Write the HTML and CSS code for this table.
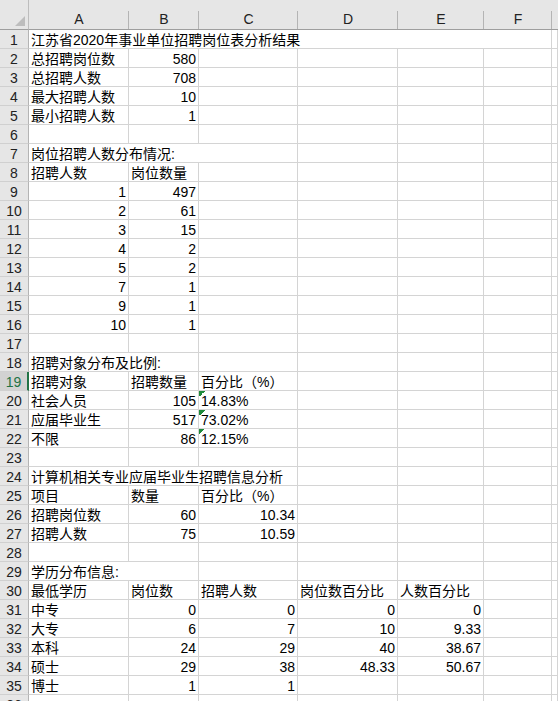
FILE: index.html
```html
<!DOCTYPE html>
<html lang="zh-CN">
<head>
<meta charset="utf-8">
<title>江苏省2020年事业单位招聘岗位表分析结果</title>
<link rel="stylesheet" href="styles.css">
</head>
<body>
<div class="sheet">
  <div class="corner"><svg width="10" height="10" viewBox="0 0 10 10"><polygon points="10,0 10,10 0,10" fill="#bdbdbd"/></svg></div>
  <div class="ch">A</div><div class="ch">B</div><div class="ch">C</div><div class="ch">D</div><div class="ch">E</div><div class="ch">F</div><div class="ch last"></div>

  <div class="n">1</div><div class="c s6">江苏省2020年事业单位招聘岗位表分析结果</div><div class="c"></div>
  <div class="n">2</div><div class="c">总招聘岗位数</div><div class="c r">580</div><div class="c"></div><div class="c"></div><div class="c"></div><div class="c"></div><div class="c"></div>
  <div class="n">3</div><div class="c">总招聘人数</div><div class="c r">708</div><div class="c"></div><div class="c"></div><div class="c"></div><div class="c"></div><div class="c"></div>
  <div class="n">4</div><div class="c">最大招聘人数</div><div class="c r">10</div><div class="c"></div><div class="c"></div><div class="c"></div><div class="c"></div><div class="c"></div>
  <div class="n">5</div><div class="c">最小招聘人数</div><div class="c r">1</div><div class="c"></div><div class="c"></div><div class="c"></div><div class="c"></div><div class="c"></div>
  <div class="n">6</div><div class="c"></div><div class="c"></div><div class="c"></div><div class="c"></div><div class="c"></div><div class="c"></div><div class="c"></div>
  <div class="n">7</div><div class="c s3">岗位招聘人数分布情况:</div><div class="c"></div><div class="c"></div><div class="c"></div><div class="c"></div>
  <div class="n">8</div><div class="c">招聘人数</div><div class="c">岗位数量</div><div class="c"></div><div class="c"></div><div class="c"></div><div class="c"></div><div class="c"></div>
  <div class="n">9</div><div class="c r">1</div><div class="c r">497</div><div class="c"></div><div class="c"></div><div class="c"></div><div class="c"></div><div class="c"></div>
  <div class="n">10</div><div class="c r">2</div><div class="c r">61</div><div class="c"></div><div class="c"></div><div class="c"></div><div class="c"></div><div class="c"></div>
  <div class="n">11</div><div class="c r">3</div><div class="c r">15</div><div class="c"></div><div class="c"></div><div class="c"></div><div class="c"></div><div class="c"></div>
  <div class="n">12</div><div class="c r">4</div><div class="c r">2</div><div class="c"></div><div class="c"></div><div class="c"></div><div class="c"></div><div class="c"></div>
  <div class="n">13</div><div class="c r">5</div><div class="c r">2</div><div class="c"></div><div class="c"></div><div class="c"></div><div class="c"></div><div class="c"></div>
  <div class="n">14</div><div class="c r">7</div><div class="c r">1</div><div class="c"></div><div class="c"></div><div class="c"></div><div class="c"></div><div class="c"></div>
  <div class="n">15</div><div class="c r">9</div><div class="c r">1</div><div class="c"></div><div class="c"></div><div class="c"></div><div class="c"></div><div class="c"></div>
  <div class="n">16</div><div class="c r">10</div><div class="c r">1</div><div class="c"></div><div class="c"></div><div class="c"></div><div class="c"></div><div class="c"></div>
  <div class="n">17</div><div class="c"></div><div class="c"></div><div class="c"></div><div class="c"></div><div class="c"></div><div class="c"></div><div class="c"></div>
  <div class="n">18</div><div class="c s2">招聘对象分布及比例:</div><div class="c"></div><div class="c"></div><div class="c"></div><div class="c"></div><div class="c"></div>
  <div class="n sel">19</div><div class="c">招聘对象</div><div class="c">招聘数量</div><div class="c">百分比（%）</div><div class="c"></div><div class="c"></div><div class="c"></div><div class="c"></div>
  <div class="n">20</div><div class="c">社会人员</div><div class="c r">105</div><div class="c flag">14.83%</div><div class="c"></div><div class="c"></div><div class="c"></div><div class="c"></div>
  <div class="n">21</div><div class="c">应届毕业生</div><div class="c r">517</div><div class="c flag">73.02%</div><div class="c"></div><div class="c"></div><div class="c"></div><div class="c"></div>
  <div class="n">22</div><div class="c">不限</div><div class="c r">86</div><div class="c flag">12.15%</div><div class="c"></div><div class="c"></div><div class="c"></div><div class="c"></div>
  <div class="n">23</div><div class="c"></div><div class="c"></div><div class="c"></div><div class="c"></div><div class="c"></div><div class="c"></div><div class="c"></div>
  <div class="n">24</div><div class="c s3">计算机相关专业应届毕业生招聘信息分析</div><div class="c"></div><div class="c"></div><div class="c"></div><div class="c"></div>
  <div class="n">25</div><div class="c">项目</div><div class="c">数量</div><div class="c">百分比（%）</div><div class="c"></div><div class="c"></div><div class="c"></div><div class="c"></div>
  <div class="n">26</div><div class="c">招聘岗位数</div><div class="c r">60</div><div class="c r">10.34</div><div class="c"></div><div class="c"></div><div class="c"></div><div class="c"></div>
  <div class="n">27</div><div class="c">招聘人数</div><div class="c r">75</div><div class="c r">10.59</div><div class="c"></div><div class="c"></div><div class="c"></div><div class="c"></div>
  <div class="n">28</div><div class="c"></div><div class="c"></div><div class="c"></div><div class="c"></div><div class="c"></div><div class="c"></div><div class="c"></div>
  <div class="n">29</div><div class="c s2">学历分布信息:</div><div class="c"></div><div class="c"></div><div class="c"></div><div class="c"></div><div class="c"></div>
  <div class="n">30</div><div class="c">最低学历</div><div class="c">岗位数</div><div class="c">招聘人数</div><div class="c">岗位数百分比</div><div class="c">人数百分比</div><div class="c"></div><div class="c"></div>
  <div class="n">31</div><div class="c">中专</div><div class="c r">0</div><div class="c r">0</div><div class="c r">0</div><div class="c r">0</div><div class="c"></div><div class="c"></div>
  <div class="n">32</div><div class="c">大专</div><div class="c r">6</div><div class="c r">7</div><div class="c r">10</div><div class="c r">9.33</div><div class="c"></div><div class="c"></div>
  <div class="n">33</div><div class="c">本科</div><div class="c r">24</div><div class="c r">29</div><div class="c r">40</div><div class="c r">38.67</div><div class="c"></div><div class="c"></div>
  <div class="n">34</div><div class="c">硕士</div><div class="c r">29</div><div class="c r">38</div><div class="c r">48.33</div><div class="c r">50.67</div><div class="c"></div><div class="c"></div>
  <div class="n">35</div><div class="c">博士</div><div class="c r">1</div><div class="c r">1</div><div class="c"></div><div class="c"></div><div class="c"></div><div class="c"></div>
  <div class="n">36</div><div class="c"></div><div class="c"></div><div class="c"></div><div class="c"></div><div class="c"></div><div class="c"></div><div class="c"></div>
</div>
</body>
</html>
```
FILE: styles.css
```css
html, body {
  margin: 0;
  padding: 0;
  background: #ffffff;
  overflow: hidden;
}

body {
  font-family: "Liberation Sans", "Noto Sans CJK SC", sans-serif;
  font-size: 14px;
  color: #000;
}

.sheet {
  display: grid;
  grid-template-columns: 29px 100px 70px 99px 100px 86px 68px 1fr;
  grid-template-rows: 30px;
  grid-auto-rows: 19px;
  width: 558px;
}

.corner {
  background: #e6e6e6;
  border-right: 1px solid #bdbdbd;
  border-bottom: 1px solid #9e9e9e;
  box-sizing: border-box;
  display: flex;
  justify-content: flex-end;
  align-items: flex-end;
  padding: 0 3px 3px 0;
}

.ch {
  background-color: #e6e6e6;
  background-image: linear-gradient(#b4b4b4, #b4b4b4);
  background-repeat: no-repeat;
  background-size: 1px 18px;
  background-position: right bottom;
  border-bottom: 1px solid #9e9e9e;
  box-sizing: border-box;
  display: flex;
  align-items: flex-end;
  justify-content: center;
  padding-bottom: 2px;
  line-height: 16px;
  color: #222;
}

.ch.last {
  background-image: none;
}

.n {
  background: #e6e6e6;
  border-right: 1px solid #b4b4b4;
  border-bottom: 1px solid #d0d0d0;
  box-sizing: border-box;
  text-align: center;
  line-height: 18px;
  padding-top: 1px;
  color: #222;
}

.n.sel {
  background: #d2d2d2;
  color: #217346;
  border-right: 2px solid #217346;
}

.c {
  border-right: 1px solid #d4d4d4;
  border-bottom: 1px solid #d4d4d4;
  box-sizing: border-box;
  padding: 1px 2px 0 2px;
  line-height: 18px;
  white-space: nowrap;
  overflow: hidden;
}

.r {
  text-align: right;
}

.s2 { grid-column: span 2; }
.s3 { grid-column: span 3; }
.s6 { grid-column: span 6; }

.flag {
  background-image: linear-gradient(135deg, #1f8a3b 50%, transparent 50%);
  background-size: 6px 6px;
  background-repeat: no-repeat;
  background-position: 0 0;
}
```
